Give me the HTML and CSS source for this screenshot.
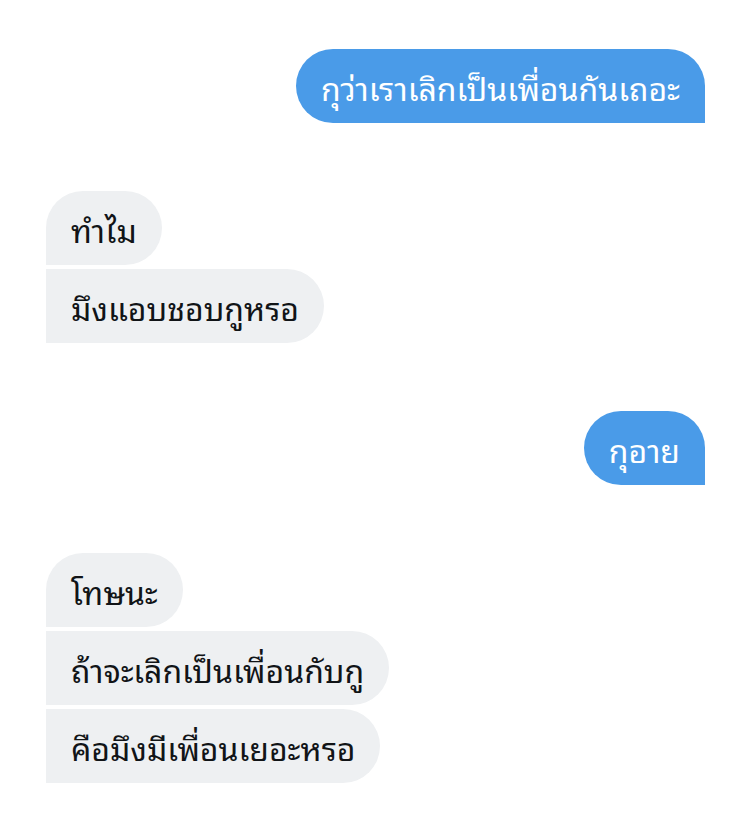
FILE: index.html
```html
<!DOCTYPE html>
<html lang="th">
<head>
<meta charset="utf-8">
<link rel="stylesheet" href="styles.css">
</head>
<body>
<div class="chat">
  <div class="group out">
    <div class="bubble blue first">กุว่าเราเลิกเป็นเพื่อนกันเถอะ</div>
  </div>
  <div class="group in">
    <div class="bubble gray first">ทำไม</div>
    <div class="bubble gray">มึงแอบชอบกูหรอ</div>
  </div>
  <div class="group out">
    <div class="bubble blue first">กุอาย</div>
  </div>
  <div class="group in">
    <div class="bubble gray first">โทษนะ</div>
    <div class="bubble gray">ถ้าจะเลิกเป็นเพื่อนกับกู</div>
    <div class="bubble gray">คือมึงมีเพื่อนเยอะหรอ</div>
  </div>
</div>
</body>
</html>
```

FILE: styles.css
```css
html, body {
  margin: 0;
  background: #ffffff;
}
.chat {
  display: flex;
  flex-direction: column;
  gap: 68px;
  padding: 49px 24px 0 46px;
  font-family: "Noto Sans Thai Looped", "Loma", "Garuda", "Waree", "Sawasdee", "Noto Sans Thai", "Noto Sans", sans-serif;
}
.group {
  display: flex;
  flex-direction: column;
  gap: 4px;
}
.group.out { align-items: flex-end; }
.group.in { align-items: flex-start; }
.bubble {
  box-sizing: border-box;
  height: 74px;
  display: flex;
  align-items: center;
  padding: 0 25px;
  font-size: 32px;
  white-space: nowrap;
}
.bubble.blue {
  background: #4a9be8;
  color: #ffffff;
  border-radius: 37px 37px 0 37px;
}
.bubble.gray {
  background: #eef0f2;
  color: #111417;
  border-radius: 0 37px 37px 0;
}
.bubble.gray.first {
  border-radius: 37px 37px 37px 0;
}
```
